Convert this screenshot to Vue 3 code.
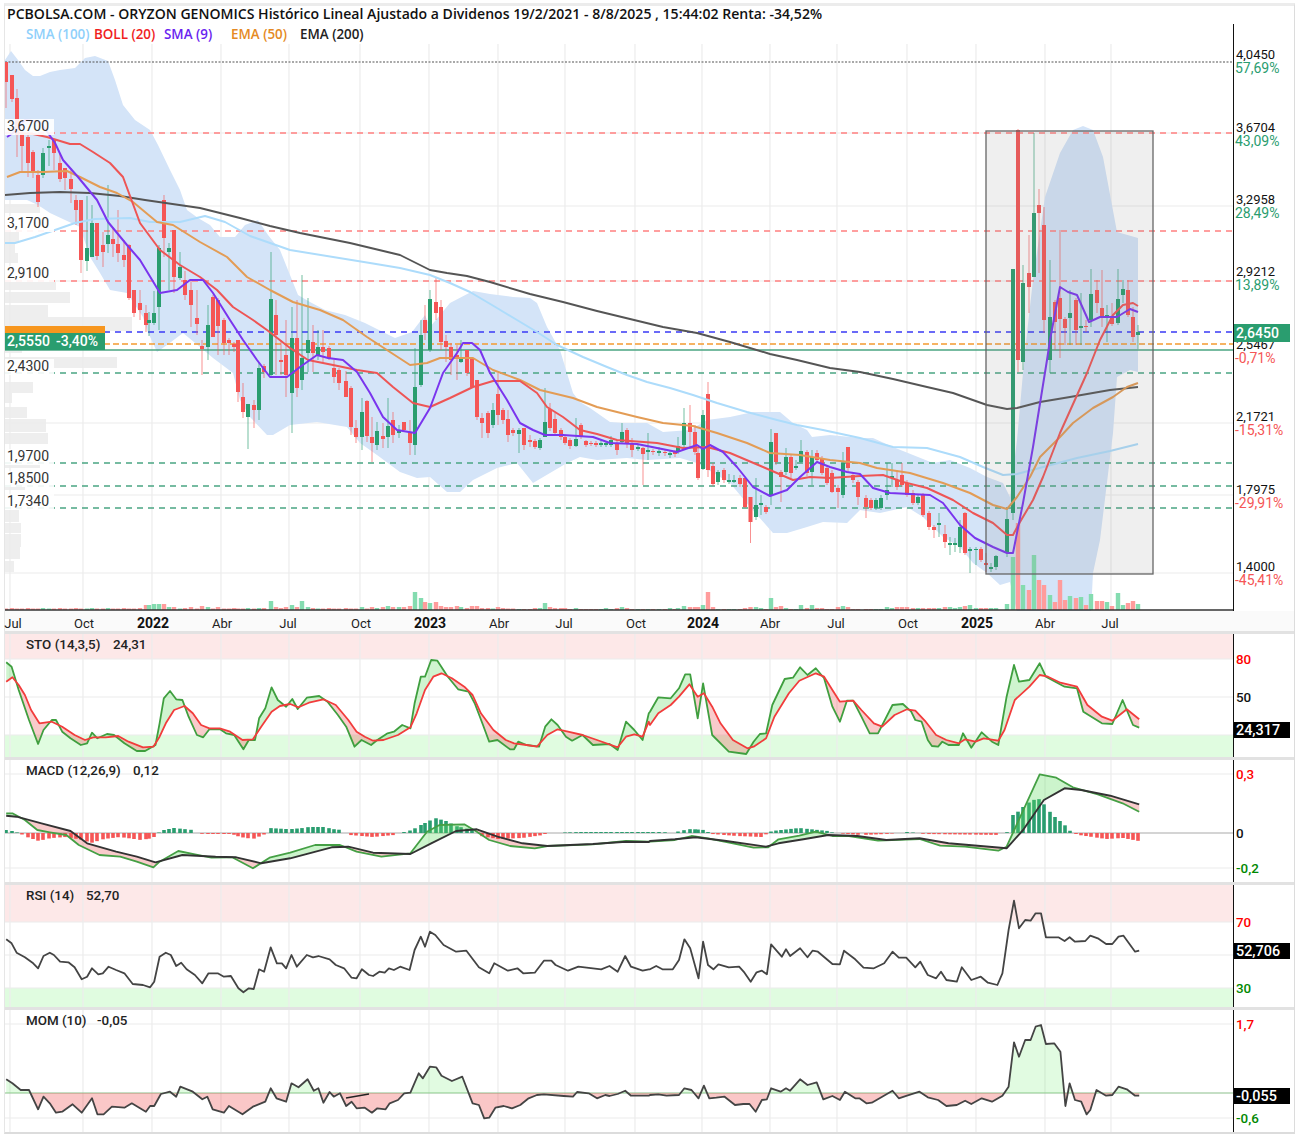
<template>
  <div class="page">
    <div class="title">PCBOLSA.COM - ORYZON GENOMICS Histórico Lineal Ajustado a Dividenos 19/2/2021 - 8/8/2025 , 15:44:02 Renta: -34,52%</div>
    <div class="legend">
      <span v-for="l in legend" :key="l.name" class="legend-item" :style="{ color: l.color, width: l.w + 'px' }">{{ l.name }}</span>
    </div>

    <div class="row">
      <svg class="plot main-plot" viewBox="5 44 1229 567">
        <rect v-for="b in profile" :key="b[0]" x="5" :y="b[0]" :width="b[2]" :height="b[1] - b[0]" fill="#eeeeee" />
        <line v-for="y in mainGrid" :key="'h' + y" x1="5" x2="1233" :y1="y" :y2="y" class="grid" />
        <line v-for="x in vGrid" :key="'v' + x" :x1="x" :x2="x" y1="44" y2="610" class="grid" />
        <polygon :points="band" fill="#d4e4f8" />

        <line v-for="l in levels" :key="l.y" x1="5" x2="1233" :y1="l.y" :y2="l.y" :stroke="l.color" :stroke-width="l.w" :stroke-dasharray="l.dash" />

        <rect v-for="c in candles" :key="'vol' + c.x" :x="c.x - 2.2" :y="610 - c.vol" width="4.4" :height="c.vol" :fill="c.up ? '#84dcb0' : '#ff9c9c'" />

        <g v-for="c in candles" :key="c.x">
          <line :x1="c.x" :x2="c.x" :y1="c.wt" :y2="c.wb" :stroke="c.up ? '#2a9d6f' : '#f55656'" stroke-opacity="0.65" />
          <rect :x="c.x - 2" :y="c.bt" width="4" :height="c.bb - c.bt" :fill="c.up ? '#2a9d6f' : '#f55656'" />
        </g>

        <polyline v-for="m in averages" :key="m.color" :points="m.points" fill="none" :stroke="m.color" :stroke-width="m.w" stroke-linejoin="round" />

        <rect x="986" y="131" width="167" height="443" fill="#808080" fill-opacity="0.13" stroke="#666" stroke-width="1.3" />

        <g v-for="l in priceTags" :key="l.t">
          <rect x="5" :y="l.y - 12" width="49" height="16" fill="#fff" fill-opacity="0.9" />
          <text x="7" :y="l.y" class="price-tag">{{ l.t }}</text>
        </g>
        <rect x="5" y="326" width="100" height="8" fill="#f7961e" />
        <rect x="5" y="333" width="100" height="17" fill="#2a9d6f" />
        <text x="7" y="346" class="badge-text">2,5550</text>
        <text x="56" y="346" class="badge-text">-3,40%</text>
        <line x1="5" x2="1233" y1="610" y2="610" stroke="#333" stroke-width="1.4" />
        <line x1="1233.5" x2="1233.5" y1="44" y2="611" stroke="#111" />
      </svg>
      <svg class="axis main-axis" viewBox="1234 44 56 567">
        <g v-for="a in mainAxis" :key="a.t">
          <text x="1236" :y="a.y" class="axis-price">{{ a.t }}</text>
          <text x="1235" :y="a.y + 14" :fill="a.pos ? '#2a9d6f' : '#f55656'" class="axis-pct">{{ a.p }}</text>
        </g>
        <rect x="1234" y="324" width="56" height="18" fill="#2a9d6f" />
        <text x="1236" y="338" class="badge-text">2,6450</text>
      </svg>
    </div>

    <svg class="time-axis" viewBox="5 611 1289 20">
      <text v-for="t in timeLabels" :key="t.x" :x="t.x" y="17" text-anchor="middle" :class="t.year ? 'tick-year' : 'tick'" transform="translate(0 611)">{{ t.t }}</text>
    </svg>

    <div v-for="p in panels" :key="p.name" class="row panel">
      <svg class="plot" :style="{ height: p.h + 'px' }" :viewBox="`5 ${p.top} 1229 ${p.h}`">
        <rect v-if="p.pink" x="5" :y="p.top" width="1228" :height="p.pink - p.top" fill="#fde8e8" />
        <rect v-if="p.mint" x="5" :y="p.mint" width="1228" :height="p.top + p.h - p.mint" fill="#e0fce0" />
        <line v-for="y in p.grid" :key="y" x1="5" x2="1233" :y1="y" :y2="y" class="grid" />
        <line v-for="x in vGrid" :key="x" :x1="x" :x2="x" :y1="p.top" :y2="p.top + p.h" class="grid" />
        <line v-if="p.zero" x1="5" x2="1233" :y1="p.zero" :y2="p.zero" :stroke="p.zeroColor" stroke-width="1.2" />

        <rect v-for="b in p.bars" :key="b.x" :x="b.x - 1.8" :y="b.y" width="3.6" :height="b.h" :fill="b.up ? '#2a9d6f' : '#f55656'" />
        <polygon v-for="(f, i) in p.fills" :key="i" :points="f.points" :fill="f.color" />
        <polyline v-for="s in p.lines" :key="s.color" :points="s.points" fill="none" :stroke="s.color" :stroke-width="s.w" stroke-linejoin="round" />
        <line v-if="p.dash" :x1="p.dash[0]" :y1="p.dash[1]" :x2="p.dash[2]" :y2="p.dash[3]" stroke="#222" stroke-width="1.4" />

        <text x="26" :y="p.top + 15" class="panel-name">{{ p.name }}</text>
        <text :x="p.valueX" :y="p.top + 15" class="panel-name">{{ p.value }}</text>
        <line x1="1233.5" x2="1233.5" :y1="p.top" :y2="p.top + p.h" stroke="#111" />
      </svg>
      <svg class="axis" :style="{ height: p.h + 'px' }" :viewBox="`1234 ${p.top} 56 ${p.h}`">
        <text v-for="a in p.axis" :key="a.t" x="1236" :y="a.y" :fill="a.c" class="panel-axis">{{ a.t }}</text>
        <template v-if="p.badgeText">
          <rect x="1234" :y="p.badge - 8" width="56" height="16" fill="#000" />
          <text x="1236" :y="p.badge + 5" class="badge-black">{{ p.badgeText }}</text>
        </template>
      </svg>
    </div>
  </div>
</template>

<script setup>
const parse = (s) => s.trim().split(/\s+/).map((p) => p.split(',').map(Number));
const toPoints = (list) => list.map((p) => p[0].toFixed(1) + ',' + p[1].toFixed(1)).join(' ');
// points read off the enlarged crops of the indicator panels
const crop = (ox, oy, s) => parse(s).map(([x, y]) => [ox + x / 2.412, oy + y / 3]);

const legend = [
  { name: 'SMA (100)', color: '#8fd0fb', w: 68 },
  { name: 'BOLL (20)', color: '#f01e1e', w: 70 },
  { name: 'SMA (9)', color: '#6a1ff0', w: 67 },
  { name: 'EMA (50)', color: '#e58a24', w: 69 },
  { name: 'EMA (200)', color: '#222', w: 70 },
];

const vGrid = [10, 83, 152, 221, 289, 360, 429, 498, 565, 635, 702, 770, 837, 907, 976, 1045, 1111];
const mainGrid = [133, 206, 281, 423, 495, 573];

const levels = [
  { y: 62, color: '#555', w: 1.2, dash: '2 1.5' },
  { y: 133, color: '#ff8080', w: 1.3, dash: '6 5' },
  { y: 231, color: '#ff8080', w: 1.3, dash: '6 5' },
  { y: 281, color: '#ff8080', w: 1.3, dash: '6 5' },
  { y: 332, color: '#3a3af5', w: 1.3, dash: '6 5' },
  { y: 344, color: '#f49a30', w: 1.3, dash: '6 3' },
  { y: 350, color: '#4aa582', w: 1.4, dash: '' },
  { y: 373, color: '#4aa582', w: 1.3, dash: '6 5' },
  { y: 463, color: '#4aa582', w: 1.3, dash: '6 5' },
  { y: 486, color: '#4aa582', w: 1.3, dash: '6 5' },
  { y: 508, color: '#4aa582', w: 1.3, dash: '6 5' },
];

const profile = [
  [204, 213, 35], [232, 243, 14], [243, 253, 10], [253, 263, 13], [282, 290, 51], [292, 303, 65],
  [305, 317, 43], [317, 331, 127], [348, 353, 17], [357, 368, 112], [382, 393, 28], [393, 403, 7],
  [407, 418, 22], [419, 432, 41], [433, 444, 43], [464, 468, 35], [487, 490, 20], [510, 522, 14],
  [523, 533, 16], [534, 547, 16], [547, 559, 15], [561, 572, 9],
];

const upper = `5,60 11,51 18,60 25,70 33,76 40,76 50,72 60,70 75,68 85,58 95,56 108,61 115,80 123,105 135,120 150,130
  158,145 170,170 180,190 187,210 198,218 210,225 220,237 235,237 245,225 258,220 268,235 280,250 290,275 298,295 310,302
  325,310 345,315 365,323 385,333 395,338 412,332 425,315 430,327 440,315 450,303 473,291 490,294 513,297 530,298 537,303
  547,327 560,350 573,393 580,402 590,408 610,422 623,423 647,423 663,432 690,430 707,420 730,417 753,412 780,412 793,423
  807,430 812,437 830,435 860,438 873,438 893,447 913,455 933,463 950,460 970,468 987,477 1003,483 1010,497 1017,440
  1023,373 1027,333 1033,280 1045,197 1060,153 1073,130 1083,126 1093,130 1103,157 1117,232 1138,238`;
const lower = `5,200 27,200 38,205 50,213 80,227 90,257 100,273 110,290 127,293 143,317 147,330 157,352 167,345 183,333 200,347
  213,358 233,373 240,400 250,417 267,435 273,435 290,425 317,422 347,427 360,443 377,455 400,472 417,478 430,477 447,492
  460,492 473,480 497,468 517,463 533,483 550,473 567,463 580,457 597,460 627,458 647,460 680,458 697,463 730,483 750,507
  773,533 787,533 807,527 823,522 847,523 860,510 880,513 907,507 923,517 943,537 960,547 973,563 987,573 1000,585 1010,582
  1017,612 1091,612 1093,573 1100,540 1113,433 1117,377 1130,370 1138,372`;
const band = toPoints([...parse(upper), ...parse(lower).reverse()]);

const averages = [
  {
    color: '#addcfb', w: 2,
    points: `5,243 15,243 35,237 55,230 75,223 95,219 130,218 150,222 180,222 205,216 225,222 250,236 290,250 370,263 400,268
      430,275 450,283 470,292 497,308 517,320 537,332 557,345 583,357 607,367 627,375 647,382 670,388 693,395 717,403 747,412
      777,420 797,425 823,430 860,438 893,447 927,448 960,457 983,467 1003,475 1017,474 1047,466 1077,458 1110,451 1138,444`,
  },
  {
    color: '#555', w: 1.9,
    points: `5,195 30,193 60,192 90,193 120,196 145,200 200,208 240,218 270,226 300,233 350,243 400,255 430,270 447,273 467,276
      490,282 530,294 563,302 597,311 630,319 663,327 697,333 730,342 750,348 770,354 797,360 830,368 860,372 893,379 927,387
      953,393 987,405 1007,409 1017,408 1040,402 1070,397 1110,390 1138,387`,
  },
  {
    color: '#e39c55', w: 2,
    points: `7,177 20,172 43,172 67,171 80,177 100,187 117,193 133,202 157,222 173,225 200,242 227,257 247,277 270,290 293,302
      320,310 343,320 367,337 390,352 410,365 427,363 440,358 473,358 493,370 520,380 540,390 573,398 597,407 637,417 663,423
      693,426 717,433 747,443 770,453 800,455 830,460 860,463 877,468 910,473 943,483 970,493 993,505 1007,509 1017,497 1030,477
      1040,457 1060,437 1073,423 1093,408 1113,397 1127,387 1138,383`,
  },
  {
    color: '#ee5555', w: 2,
    points: `17,133 33,134 47,137 70,144 80,144 93,152 110,163 123,177 140,223 160,250 180,265 200,277 217,290 233,307 253,320
      267,330 290,348 308,360 333,365 357,370 377,373 393,387 413,403 430,407 450,398 473,387 493,381 520,381 537,393 547,407
      563,417 580,430 597,434 617,440 657,443 683,448 707,447 730,453 763,467 793,480 810,477 830,478 860,476 883,475 903,482
      927,488 953,500 973,513 993,523 1007,535 1013,535 1020,522 1033,500 1043,477 1060,433 1087,373 1100,340 1113,315 1123,305
      1133,303 1138,306`,
  },
  {
    color: '#7a35ee', w: 2,
    points: `7,137 13,133 25,120 40,122 48,133 55,143 63,160 78,177 97,200 108,222 127,245 140,260 160,293 177,290 190,280 203,280
      213,293 230,320 243,340 257,360 270,377 287,377 300,367 317,355 328,358 343,360 357,372 370,393 383,417 397,430 415,433
      430,408 443,373 457,353 463,343 472,343 480,350 490,373 507,400 520,423 533,430 545,435 563,435 593,437 610,443 637,444
      657,448 677,452 697,445 703,449 710,445 723,452 737,467 753,487 770,496 787,490 800,477 817,462 830,467 847,472 860,474
      873,488 890,493 910,494 930,495 943,503 960,525 975,538 993,547 1007,553 1013,553 1023,503 1033,447 1047,360 1050,340
      1060,287 1068,292 1077,295 1089,322 1100,317 1117,317 1130,309 1138,312`,
  },
];

// x, r/g, body top, body bottom, wick top, wick bottom, volume height
const rawCandles = [
  [6,'r',62,82,62,108],[12,'r',75,99,75,102],[17,'r',98,135,89,157],[22,'r',133,146,130,172],[28,'r',137,163,133,177],
  [33,'r',152,173,150,178],[38,'r',175,202,170,207],[43,'g',153,175,148,178],[49,'g',146,148,140,166],[54,'r',140,153,139,170],
  [60,'r',163,179,153,182],[65,'r',168,178,168,190],[71,'r',179,189,168,203],[76,'r',200,210,195,225],[81,'r',200,260,200,273],
  [87,'g',248,261,196,271],[92,'g',223,257,205,257],[97,'r',223,256,223,260],[103,'r',245,252,232,267],[108,'g',235,244,185,253],
  [113,'r',239,244,227,257],[118,'r',244,253,210,262],[124,'r',255,260,240,267],[129,'r',245,298,244,300],[134,'r',290,313,290,317],
  [140,'r',303,310,290,320],[146,'r',313,325,305,332,5],[149,'g',320,323,312,336,5],[154,'g',313,323,291,325,6],[159,'g',248,307,245,330,6],
  [164,'r',200,238,195,257,6],[169,'g',248,252,243,290,3],[174,'r',230,277,230,293,3],[180,'g',267,278,252,280],[185,'r',280,295,271,300],
  [191,'r',290,305,280,327,3],[197,'r',318,324,290,335],[202,'r',346,349,340,375,4],[208,'g',325,347,305,360,3],[213,'r',297,337,295,337],
  [218,'r',300,326,298,355,3],[224,'r',320,343,318,355],[229,'r',340,343,338,355],[234,'r',344,347,342,352],[238,'r',340,392,340,402],
  [243,'r',397,412,383,418],[248,'g',404,417,404,449],[254,'r',405,410,400,428],[259,'g',368,410,363,420,2],[264,'r',366,372,364,378],
  [271,'g',299,375,252,378,9],[276,'r',315,335,300,375,3],[281,'r',360,362,340,375],[286,'r',355,375,320,397,3],[292,'g',338,393,307,433,5],
  [297,'r',338,388,300,397,3],[302,'g',358,380,275,390,9],[308,'g',340,353,298,372,3],[313,'r',342,353,325,372],[318,'g',347,355,330,360],
  [323,'r',347,352,330,362],[329,'r',348,358,346,360],[334,'r',368,377,360,383],[339,'r',370,383,368,390],[346,'r',381,397,371,397],
  [351,'r',388,427,386,435],[356,'r',428,437,420,443],[362,'g',412,437,398,450,3],[367,'r',401,436,400,442],[372,'r',437,443,417,462,3],
  [377,'g',431,445,422,450],[383,'r',436,439,423,448,3],[388,'g',426,437,398,448,4],[393,'r',420,435,412,443,3],[399,'g',430,433,425,438,3],
  [404,'r',422,430,422,432,3],[410,'r',432,443,420,455,4],[415,'g',387,445,348,455,18],[421,'g',335,385,320,387,12],[425,'r',320,333,305,340,8],
  [430,'g',299,350,290,352,7],[436,'r',302,313,277,320,8],[441,'r',307,342,300,350,4],[446,'r',341,347,335,362,3],[451,'r',347,360,343,375,3],
  [457,'r',355,358,345,380,4],[461,'g',358,362,340,363,3],[467,'r',350,373,350,376,2],[472,'r',358,387,357,388,4],[477,'r',380,417,380,420,4],
  [482,'r',418,423,413,438,2],[488,'r',413,433,411,438],[493,'g',410,425,403,428],[498,'r',394,415,373,425,3],[503,'r',410,420,408,424],
  [508,'r',419,435,410,442],[513,'r',430,433,428,436],[519,'g',430,434,428,453,1],[524,'r',428,445,428,450,1],[530,'r',440,442,435,447,1],
  [535,'r',441,447,439,449],[540,'g',440,448,438,450,2],[545,'g',422,437,388,437,7],[550,'r',409,428,403,431,3],[555,'r',419,433,413,434,2],
  [561,'r',430,437,428,440,2],[565,'r',437,443,435,445,2],[570,'r',440,446,438,449,1],[576,'g',439,446,418,447,2],[581,'r',425,437,423,439,1],
  [586,'r',441,445,440,447,1],[591,'r',443,444,441,446,1],[596,'r',443,445,441,447,1],[601,'g',443,445,440,447,1],[606,'g',443,445,441,447,2],
  [611,'g',440,445,436,447,1],[617,'r',444,450,440,455,2],[622,'g',432,442,423,443,3],[627,'r',430,443,428,448,2],[632,'r',443,450,438,457,1],
  [638,'g',447,449,445,451,1],[643,'r',448,454,447,485,1],[648,'g',450,452,433,460,1],[653,'r',451,452,449,455,1],[659,'g',451,453,447,456,1],
  [665,'r',452,453,450,456,1],[670,'g',453,455,450,458,2],[675,'r',452,454,450,457,1],[678,'g',446,452,437,454,2],[684,'g',423,445,408,447,4],
  [690,'r',423,432,405,447,3],[695,'r',432,452,425,455,3],[698,'r',453,478,447,480,3],[703,'g',415,469,410,470,5],[708,'r',394,470,382,477,18],
  [713,'r',466,484,463,486,3],[718,'g',472,482,470,485,1],[724,'r',470,480,468,483,1],[729,'g',480,482,474,484,1],[734,'g',480,482,475,483,1],
  [740,'r',478,484,475,487,1],[745,'r',478,507,478,508,2],[750.5,'r',497,522,497,543,3],[756,'g',505,517,478,520,3],[761,'g',503,505,495,515,2],
  [766,'r',507,512,505,514,1],[771,'g',442,495,429,505,12],[776,'r',433,462,433,465,3],[781,'r',472,477,470,502,4],[786,'g',457,472,448,475,2],
  [791,'r',457,473,455,478,1],[796,'g',466,468,460,470,1],[801,'g',451,462,440,463,5],[807,'r',452,473,450,476,2],[812,'g',457,472,450,485,5],
  [817,'r',453,460,450,463,2],[822,'r',458,473,456,475,2],[827,'r',468,483,465,485,1],[832,'r',473,492,470,493,1],[838,'r',488,492,485,508,3],
  [843,'g',463,495,452,498,4],[848,'r',447,468,447,473,3],[853,'r',475,480,473,483,1],[858,'r',482,497,480,505,1],[866,'r',498,507,495,518,1],
  [871,'r',500,508,498,510,1],[876,'g',500,508,498,510,1],[881,'g',498,508,495,510,1],[887,'g',490,495,463,500,3],[892,'g',476,478,463,487,2],
  [897,'r',480,487,470,490,3],[902,'r',475,485,463,487,3],[907,'r',483,495,480,497,3],[913,'r',493,503,490,505,2],[918,'g',497,503,495,505,2],
  [923,'r',495,515,493,517,2],[929,'r',513,527,511,530,2],[934,'r',527,530,525,538,2],[939,'g',523,525,513,537,2],[945,'r',534,542,525,548,3],
  [950,'g',543,545,537,555,3],[955,'g',543,545,538,552,2],[960,'g',527,547,520,553,3],[965,'r',513,553,512,555,4],[970,'g',549,551,547,573,5],
  [976,'g',549,550,547,565,2],[981,'r',549,560,547,562,2],[986,'r',563,565,553,572,2],[991,'g',567,569,563,572,2],[996,'g',556,567,555,570,2],
  [1007,'g',519,553,508,557,6],[1013,'g',269,513,269,520,53],[1018,'r',130,360,129,372,87],[1023,'g',283,362,265,370,25],[1029,'r',273,287,235,313,20],
  [1034,'g',213,277,133,277,55],[1039,'r',205,213,189,273,30],[1044,'r',225,320,207,333,25],[1050,'g',317,360,260,373,15],[1055,'r',302,322,300,350,8],
  [1060,'r',298,319,230,358,30],[1065,'r',319,328,317,345,10],[1070,'g',313,318,290,345,14],[1076,'r',300,330,298,345,12],[1081,'g',326,328,293,345,13],
  [1086,'r',326,327,320,332,5],[1091,'g',294,320,269,327,16],[1097,'r',290,303,280,313,9],[1102,'r',308,317,270,327,9],[1107,'g',315,316,305,342,8],
  [1112,'r',318,324,303,326,4],[1118,'g',299,323,269,325,17],[1123,'g',289,295,280,303,5],[1128,'r',290,315,280,317,7],[1133,'r',317,337,307,342,9],
  [1138,'g',332,335,325,349,6],
];

const candles = rawCandles.map((c, i) => ({
  x: c[0],
  up: c[1] === 'g',
  bt: c[2],
  bb: c[3],
  wt: c[4],
  wb: c[5],
  vol: c[6] ?? (i % 3 === 1 ? 2 : 1.5),
}));

const priceTags = [
  { t: '3,6700', y: 131 },
  { t: '3,1700', y: 228 },
  { t: '2,9100', y: 278 },
  { t: '2,4300', y: 371 },
  { t: '1,9700', y: 461 },
  { t: '1,8500', y: 483 },
  { t: '1,7340', y: 506 },
];

const mainAxis = [
  { t: '4,0450', p: '57,69%', y: 59, pos: true },
  { t: '3,6704', p: '43,09%', y: 132, pos: true },
  { t: '3,2958', p: '28,49%', y: 204, pos: true },
  { t: '2,9212', p: '13,89%', y: 276, pos: true },
  { t: '2,5467', p: '-0,71%', y: 349, pos: false },
  { t: '2,1721', p: '-15,31%', y: 421, pos: false },
  { t: '1,7975', p: '-29,91%', y: 494, pos: false },
  { t: '1,4000', p: '-45,41%', y: 571, pos: false },
];

const timeLabels = [
  { t: 'Jul', x: 13 }, { t: 'Oct', x: 84 }, { t: '2022', x: 153, year: true }, { t: 'Abr', x: 222 },
  { t: 'Jul', x: 288 }, { t: 'Oct', x: 361 }, { t: '2023', x: 430, year: true }, { t: 'Abr', x: 499 },
  { t: 'Jul', x: 564 }, { t: 'Oct', x: 636 }, { t: '2024', x: 703, year: true }, { t: 'Abr', x: 770 },
  { t: 'Jul', x: 836 }, { t: 'Oct', x: 908 }, { t: '2025', x: 977, year: true }, { t: 'Abr', x: 1045 },
  { t: 'Jul', x: 1110 },
];

const interp = (list, x) => {
  for (let i = 1; i < list.length; i++) {
    if (x <= list[i][0]) {
      const [x0, y0] = list[i - 1];
      const [x1, y1] = list[i];
      return y0 + ((y1 - y0) * (x - x0)) / (x1 - x0 || 1);
    }
  }
  return list[list.length - 1][1];
};

// splits the area between two lines into one polygon per side
const fillBetween = (a, b, colorA, colorB) => {
  const from = Math.max(a[0][0], b[0][0]);
  const to = Math.min(a[a.length - 1][0], b[b.length - 1][0]);
  const result = [];
  let top = [];
  let bottom = [];
  let side = null;
  const flush = () => {
    if (top.length > 1) {
      result.push({ points: toPoints([...top, ...bottom.reverse()]), color: side ? colorA : colorB });
    }
    top = [];
    bottom = [];
  };
  for (let x = from; x <= to; x += 1) {
    const ya = interp(a, x);
    const yb = interp(b, x);
    const s = ya < yb;
    if (s !== side) {
      const last = top[top.length - 1];
      const lastB = bottom[bottom.length - 1];
      flush();
      if (last) {
        top.push(last);
        bottom.push(lastB);
      }
      side = s;
    }
    top.push([x, ya]);
    bottom.push([x, yb]);
  }
  flush();
  return result;
};

const stoFast = [...crop(0, 630, `15,97 28,110 45,180 70,270 92,342 105,300 125,270 135,270 150,305 170,325 195,345 210,340 222,308 235,325 258,312 275,315 300,340 330,363 350,363 375,345 385,280 395,205 410,183 425,208 440,210 455,260 475,315 490,322 505,298 530,297 545,310 565,315 587,358 600,330 615,330 625,265 640,235 655,172 670,210 690,230 705,207 718,237 740,203 770,198 790,215 815,255 835,290 855,350 872,330 895,345 910,330 935,310 950,305 970,285 990,295 1000,220 1015,140 1025,140 1040,90 1055,92 1080,140 1105,178 1130,185 1145,220 1165,285 1180,335 1200,330 1230,358 1240,358 1250,335 1270,345 1300,350 1315,290 1330,268 1345,285 1365,320 1380,332 1405,315 1430,345 1470,342 1490,360 1510,275 1530,300 1550,330 1565,250`),
  ...crop(650, 630, `0,245 20,202 50,205 70,175 85,133 97,133 115,265 128,160 150,315 190,365 232,372 250,335 265,312 280,310 295,225 325,147 345,143 362,112 380,135 400,115 420,145 440,230 458,275 475,212 490,212 510,260 530,310 550,310 585,225 610,222 630,245 640,270 655,275 670,330 680,348 695,350 705,335 720,345 745,345 755,310 775,353 800,307 825,335 840,345 860,200 878,105 890,155 915,150 940,100 955,140 1000,170 1030,175 1045,245 1090,280 1115,282 1140,210 1165,285 1180,293`)];
const stoSlow = [...crop(0, 630, `15,155 30,142 45,165 60,195 75,240 95,280 125,275 150,290 180,315 205,330 225,322 255,322 285,318 310,335 345,352 370,350 385,320 400,280 420,240 445,228 465,250 485,285 505,295 530,295 555,305 585,330 610,328 630,290 655,245 675,228 700,222 720,232 745,218 780,208 810,225 840,270 860,305 880,320 900,332 925,330 960,315 990,292 1005,250 1025,180 1045,140 1065,130 1090,145 1120,170 1140,195 1160,250 1190,300 1220,330 1240,340 1270,345 1295,350 1320,315 1345,298 1370,305 1405,315 1440,330 1490,352 1510,320 1530,313 1550,320 1565,275`),
  ...crop(650, 630, `0,285 20,250 50,225 70,200 95,163 115,200 130,190 150,230 170,280 200,330 235,355 250,350 280,325 300,260 335,190 360,152 400,130 420,140 440,180 458,215 490,212 510,240 540,280 560,290 590,255 620,238 640,242 665,275 690,315 715,330 745,340 760,328 785,335 805,325 840,332 855,300 880,210 915,170 940,135 960,140 990,158 1030,170 1055,225 1090,260 1115,272 1150,238 1180,268`)];

const macdLine = [...crop(0, 630, `15,550 30,550 60,570 90,600 120,607 160,615 190,645 240,675 290,680 330,695 370,712 385,695 430,663 470,673 510,683 560,682 610,715 650,683 700,668 760,645 820,645 860,665 920,680 990,670 1030,605 1060,585 1120,583 1150,605 1180,630 1230,648 1290,655 1320,648 1430,643 1510,633 1565,635`),
  ...crop(650, 630, `0,635 60,630 100,618 140,625 200,640 250,653 285,652 310,628 360,617 400,605 440,618 480,618 550,632 650,627 700,647 760,650 840,662 860,650 940,433 980,443 1020,472 1080,493 1140,520 1180,545`)];
const macdSignal = [...crop(0, 630, `15,557 40,560 100,580 170,603 210,640 280,665 330,680 375,697 440,675 520,680 570,682 630,700 700,685 800,652 840,650 900,668 990,672 1040,640 1100,603 1150,598 1200,620 1260,640 1320,648 1430,642 1510,635 1565,636`),
  ...crop(650, 630, `0,633 60,628 110,622 180,632 280,650 310,640 370,628 430,615 500,618 570,630 650,625 720,640 860,655 900,600 950,510 1000,475 1040,480 1110,497 1180,523`)];

// histogram height along x, positive is above the zero line
const histogram = parse(`6,3 12,2 19,0 21,-1 27,-4 33,-6 39,-8 46,-6 52,-5 66,-4 83,-7 91,-10 104,-6 120,-4 141,-7 153,-5 158,0 164,3 174,5 193,3 197,0
  203,-1 232,-1 240,-4 253,-6 263,-2 267,0 269,5 286,4 292,4 303,5 309,6 325,6 332,4 342,3 346,0 350,-2 373,-4 394,-2 400,0 412,3 419,7 427,11 435,15
  446,12 456,7 473,3 477,0 481,-3 498,-6 522,-5 543,-2 547,0 580,1 643,1 662,1 675,0 679,2 691,4 704,3 710,0 712,-1 737,-3 762,-4 768,0 772,2 799,5
  828,2 834,0 861,-2 886,-1 899,0 907,1 919,0 924,-1 1006,-2 1013,18 1019,22 1025,28 1033,33 1040,34 1046,26 1051,20 1057,14 1063,10 1069,3 1073,0
  1079,-2 1106,-6 1123,-5 1139,-8`);
const macdBars = candles.map((c) => {
  const v = interp(histogram, c.x);
  return { x: c.x, up: v > 0, y: v > 0 ? 833 - v : 833, h: Math.abs(v) };
}).filter((b) => b.h >= 0.5);

const rsi = [...crop(0, 880, `15,178 28,190 40,218 60,232 80,250 92,265 105,228 120,218 130,225 145,245 165,247 180,262 197,298 210,290 222,265 237,283 248,280 262,260 280,270 300,280 320,312 345,315 362,322 372,305 385,230 400,218 412,225 425,258 437,248 450,268 470,285 488,310 503,280 525,280 540,290 557,288 575,325 587,337 600,325 612,327 625,268 637,275 653,202 668,250 680,250 690,265 703,225 716,260 740,225 755,232 768,228 795,238 810,255 830,265 848,293 860,295 873,268 890,285 900,288 915,275 928,278 938,265 950,270 965,260 988,270 1000,210 1015,170 1025,200 1037,155 1050,165 1070,195 1100,215 1125,212 1155,262 1180,280 1192,250 1225,272 1248,265 1262,280 1290,278 1312,242 1330,242 1340,255 1370,272 1395,260 1450,268 1470,258 1490,275 1508,228 1522,260 1550,272 1565,268`),
  ...crop(650, 880, `0,268 15,258 30,268 55,268 70,240 83,178 97,205 117,295 128,185 140,255 153,268 165,253 190,262 215,260 228,278 243,305 257,277 270,272 282,283 292,193 318,230 328,208 338,228 362,205 380,232 392,212 405,215 440,252 458,253 468,212 495,238 515,263 540,265 565,250 585,215 600,233 618,233 640,262 652,245 670,285 690,295 702,275 715,300 740,305 752,262 775,300 798,290 815,308 838,315 850,280 865,150 878,62 890,145 905,120 918,122 930,100 943,100 955,172 985,172 1000,183 1012,172 1025,185 1050,183 1062,167 1080,175 1100,192 1115,192 1130,170 1142,167 1170,215 1180,212`)];

const mom = [...crop(0, 880, `15,598 30,610 50,630 70,630 92,688 105,650 120,670 135,698 150,695 175,673 197,698 222,655 235,703 250,703 270,680 300,683 318,670 352,695 362,678 372,678 388,642 410,635 425,650 435,620 465,635 488,658 500,650 513,688 540,698 552,678 585,703 610,680 640,665 653,625 667,655 690,665 703,610 720,622 742,598 757,632 768,625 780,668 795,636 805,650 820,640 835,678 848,665 860,685 880,683 897,698 910,685 930,688 940,670 960,660 975,640 990,638 1010,580 1020,595 1037,560 1052,562 1065,587 1090,603 1115,590 1140,670 1155,675 1168,715 1180,713 1195,683 1215,678 1235,685 1255,675 1275,655 1295,645 1312,643 1360,648 1382,650 1392,636 1420,640 1440,655 1460,645 1470,648 1490,642 1508,632 1522,647 1565,647`),
  ...crop(650, 880, `0,645 20,643 40,647 70,645 83,625 100,630 117,655 130,617 143,655 160,653 180,650 205,675 225,672 240,672 255,695 270,660 282,658 292,625 315,635 328,625 338,632 362,598 380,615 402,607 418,658 440,648 458,660 470,635 495,655 505,655 522,670 535,668 560,650 585,632 600,655 620,647 650,635 670,652 695,660 715,678 740,675 760,662 775,672 800,655 825,665 850,647 865,620 878,487 890,530 905,480 918,480 930,440 943,435 955,492 975,490 990,515 1002,678 1012,610 1025,660 1040,665 1053,703 1062,690 1077,630 1100,647 1115,645 1130,620 1150,628 1170,647 1180,647`)];
const momZero = [[5, 1093], [1140, 1093]];

const panels = [
  {
    name: 'STO (14,3,5)', value: '24,31', valueX: 113, top: 634, h: 123, pink: 659, mint: 735, grid: [659, 697, 735],
    fills: fillBetween(stoFast, stoSlow, 'rgba(95,220,95,0.3)', 'rgba(235,70,70,0.28)'),
    lines: [
      { color: '#3f9f3f', w: 1.8, points: toPoints(stoFast) },
      { color: '#f23c3c', w: 1.8, points: toPoints(stoSlow) },
    ],
    axis: [{ t: '80', y: 664, c: '#f00' }, { t: '50', y: 702, c: '#111' }],
    badge: 730, badgeText: '24,317',
  },
  {
    name: 'MACD (12,26,9)', value: '0,12', valueX: 133, top: 760, h: 122, grid: [774, 868], zero: 833, zeroColor: '#aaa',
    bars: macdBars,
    fills: fillBetween(macdLine, macdSignal, 'rgba(95,220,95,0.32)', 'rgba(235,70,70,0.28)'),
    lines: [
      { color: '#45a045', w: 1.8, points: toPoints(macdLine) },
      { color: '#333', w: 1.9, points: toPoints(macdSignal) },
    ],
    axis: [{ t: '0,3', y: 779, c: '#f00' }, { t: '0', y: 838, c: '#111' }, { t: '-0,2', y: 873, c: '#080' }],
    badge: 0, badgeText: '',
  },
  {
    name: 'RSI (14)', value: '52,70', valueX: 86, top: 885, h: 122, pink: 922, mint: 988, grid: [922, 955, 988],
    lines: [{ color: '#444', w: 1.8, points: toPoints(rsi) }],
    axis: [{ t: '70', y: 927, c: '#f00' }, { t: '30', y: 993, c: '#080' }],
    badge: 951, badgeText: '52,706',
  },
  {
    name: 'MOM (10)', value: '-0,05', valueX: 97, top: 1010, h: 122, grid: [1024, 1118], zero: 1093, zeroColor: '#8cbf8c',
    fills: fillBetween(mom, momZero, 'rgba(120,235,120,0.22)', 'rgba(240,70,70,0.3)'),
    lines: [{ color: '#444', w: 1.8, points: toPoints(mom) }],
    dash: [346, 1098, 369, 1094],
    axis: [{ t: '1,7', y: 1029, c: '#f00' }, { t: '-0,6', y: 1123, c: '#080' }],
    badge: 1096, badgeText: '-0,055',
  },
];
</script>

<style scoped>
.page {
  box-sizing: border-box;
  width: 1291px;
  height: 1131px;
  margin-top: 3px;
  margin-left: 4px;
  border-top: 3px solid #ececec;
  border-left: 1px solid #e6e6e6;
  border-right: 1px solid #dcdcdc;
  border-bottom: 2px solid #dcdcdc;
  background: #fff;
}

.title {
  height: 18px;
  padding-left: 2px;
  font: 600 14.07px/16px "Open Sans", sans-serif;
  color: #111;
  white-space: nowrap;
}

.legend {
  display: flex;
  box-sizing: border-box;
  width: 1229px;
  height: 20px;
  padding-left: 21px;
  border-right: 1px solid #111;
  font: 600 13.4px/20px "Open Sans", sans-serif;
}

.legend-item {
  display: block;
  white-space: nowrap;
}

.row {
  display: flex;
  width: 1289px;
}

.panel {
  border-top: 3px solid #e2e2e2;
}

.plot {
  display: block;
  width: 1229px;
  flex: none;
}

.main-plot,
.main-axis {
  height: 567px;
}

.axis {
  display: block;
  width: 56px;
  flex: none;
  overflow: visible;
}

.time-axis {
  display: block;
  width: 1289px;
  height: 20px;
  background: #fafafa;
  overflow: visible;
}

.grid {
  stroke: #ececec;
  stroke-width: 1.2;
}

.price-tag {
  font: 400 14px Roboto, sans-serif;
  fill: #333;
}

.badge-text {
  font: 500 14px Roboto, sans-serif;
  fill: #fff;
}

.badge-black {
  font: 500 14.4px Roboto, sans-serif;
  fill: #fff;
}

.axis-price {
  font: 400 13px Roboto, sans-serif;
  fill: #111;
}

.axis-pct {
  font: 400 14px Roboto, sans-serif;
}

.tick {
  font: 400 13px Roboto, sans-serif;
  fill: #222;
}

.tick-year {
  font: 700 14px Roboto, sans-serif;
  fill: #111;
}

.panel-name {
  font: 500 13.4px Roboto, sans-serif;
  fill: #222;
}

.panel-axis {
  font: 500 13.4px Roboto, sans-serif;
}
</style>
